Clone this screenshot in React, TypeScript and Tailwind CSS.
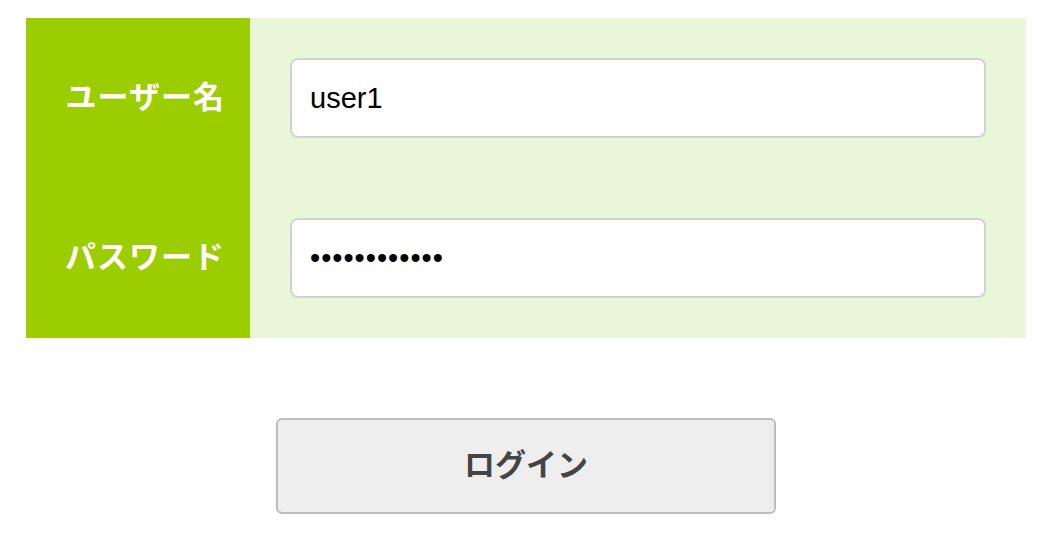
import React, { useState } from 'react';

const FONT = { fontFamily: '"Liberation Sans", "Noto Sans CJK JP", sans-serif' };

function FieldRow({ label, children }: { label: string; children: React.ReactNode }) {
  return (
    <div className="flex h-[160px]">
      <div className="flex w-[224px] items-center justify-end bg-[#9ccd00] pr-[25px] text-[31px] font-bold tracking-[1px] text-white">
        {label}
      </div>
      <div className="flex flex-1 items-center bg-[#e8f7d7] px-[40px]">{children}</div>
    </div>
  );
}

export default function App() {
  const [user, setUser] = useState('user1');
  const [pass, setPass] = useState('password1234');

  return (
    <div className="min-h-screen bg-white pt-[18px] pl-[26px]" style={FONT}>
      <div className="w-[1000px]">
        <FieldRow label="ユーザー名">
          <input
            value={user}
            onChange={(e) => setUser(e.target.value)}
            className="h-[80px] w-full rounded-[8px] border-2 border-[#d2d2d2] bg-white px-[18px] text-[29px] text-black outline-none"
          />
        </FieldRow>
        <FieldRow label="パスワード">
          <input
            type="password"
            value={pass}
            onChange={(e) => setPass(e.target.value)}
            className="h-[80px] w-full rounded-[8px] border-2 border-[#d2d2d2] bg-white px-[18px] text-[29px] tracking-[1px] text-black outline-none"
          />
        </FieldRow>
        <div className="flex justify-center pt-[80px]">
          <button
            type="button"
            className="h-[96px] w-[500px] rounded-[6px] border-2 border-[#bdbdbd] bg-[#eeeeee] text-[31px] font-bold text-[#444444]"
          >
            ログイン
          </button>
        </div>
      </div>
    </div>
  );
}
